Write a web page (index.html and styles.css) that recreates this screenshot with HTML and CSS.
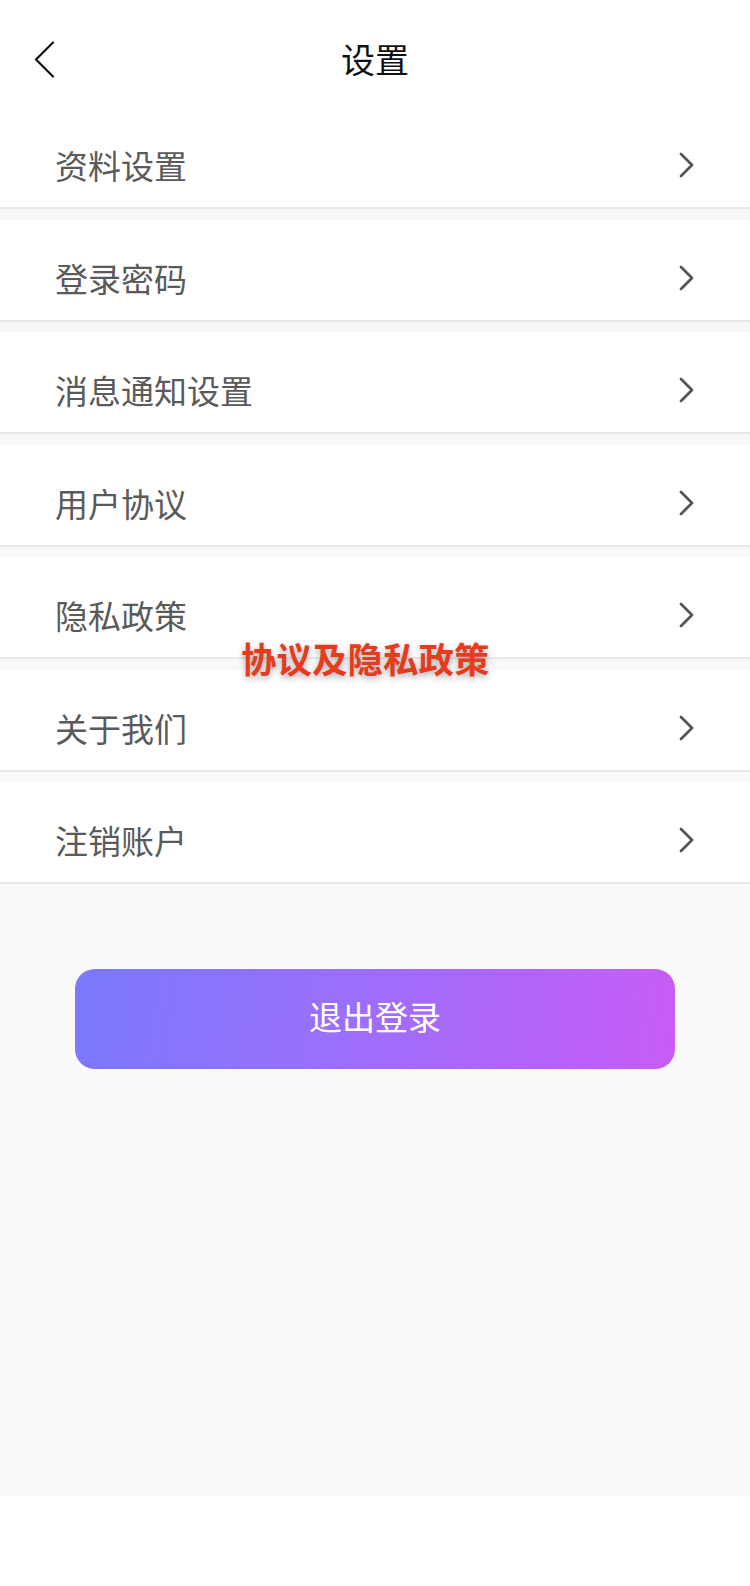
FILE: index.html
```html
<!DOCTYPE html>
<html lang="zh-CN">
<head>
    <meta charset="UTF-8">
    <meta name="viewport" content="width=device-width, initial-scale=1.0">
    <title>设置</title>
    <link rel="stylesheet" href="styles.css">
</head>
<body>

    <div class="page">
        <!-- Top bar -->
        <div class="top-bar">
            <svg class="back-icon" width="22" height="37" viewBox="0 0 22 37">
                <polyline points="20,1.5 3,18.5 20,35.5" fill="none" stroke="#111" stroke-width="2.2" stroke-linecap="round" stroke-linejoin="round"/>
            </svg>
            <h1 class="top-title">设置</h1>
        </div>

        <!-- Settings list -->
        <div class="settings-list">
            <div class="setting-row"><span>资料设置</span><svg class="arrow" width="18" height="28" viewBox="0 0 18 28"><polyline points="3,3 14,14 3,25" fill="none" stroke="#555" stroke-width="2.8" stroke-linecap="round" stroke-linejoin="round"/></svg></div>
            <div class="setting-row"><span>登录密码</span><svg class="arrow" width="18" height="28" viewBox="0 0 18 28"><polyline points="3,3 14,14 3,25" fill="none" stroke="#555" stroke-width="2.8" stroke-linecap="round" stroke-linejoin="round"/></svg></div>
            <div class="setting-row"><span>消息通知设置</span><svg class="arrow" width="18" height="28" viewBox="0 0 18 28"><polyline points="3,3 14,14 3,25" fill="none" stroke="#555" stroke-width="2.8" stroke-linecap="round" stroke-linejoin="round"/></svg></div>
            <div class="setting-row"><span>用户协议</span><svg class="arrow" width="18" height="28" viewBox="0 0 18 28"><polyline points="3,3 14,14 3,25" fill="none" stroke="#555" stroke-width="2.8" stroke-linecap="round" stroke-linejoin="round"/></svg></div>
            <div class="setting-row"><span>隐私政策</span><svg class="arrow" width="18" height="28" viewBox="0 0 18 28"><polyline points="3,3 14,14 3,25" fill="none" stroke="#555" stroke-width="2.8" stroke-linecap="round" stroke-linejoin="round"/></svg></div>
            <div class="setting-row"><span>关于我们</span><svg class="arrow" width="18" height="28" viewBox="0 0 18 28"><polyline points="3,3 14,14 3,25" fill="none" stroke="#555" stroke-width="2.8" stroke-linecap="round" stroke-linejoin="round"/></svg></div>
            <div class="setting-row"><span>注销账户</span><svg class="arrow" width="18" height="28" viewBox="0 0 18 28"><polyline points="3,3 14,14 3,25" fill="none" stroke="#555" stroke-width="2.8" stroke-linecap="round" stroke-linejoin="round"/></svg></div>

            <!-- annotation label over the list -->
            <div class="note-label">协议及隐私政策</div>
        </div>

        <!-- Logout area -->
        <div class="logout-area">
            <button class="logout-btn">退出登录</button>
        </div>
    </div>

</body>
</html>
```

FILE: styles.css
```css
:root {
    --white: #FFFFFF; --bg-gray: #f9f9f9; --line: #e8e8e8;
    --text-dark: #111; --text-medium: #5a5a5a;
}
html, body { margin: 0; padding: 0; background-color: var(--white); }
body {
    font-family: "Noto Sans CJK SC", "Noto Sans", sans-serif;
    color: var(--text-dark);
}
.page { width: 750px; }

.top-bar {
    height: 107px; position: relative; display: flex;
    align-items: flex-start; justify-content: center; background-color: var(--white);
}
.back-icon { position: absolute; left: 33px; top: 41px; }
.top-title {
    margin: 0; padding-top: 37px; font-size: 34px; font-weight: 400;
    line-height: 44px; color: var(--text-dark);
}

.settings-list { position: relative; background: linear-gradient(#f6f6f6, #fafafa); }
.setting-row {
    height: 100px; box-sizing: content-box; background-color: var(--white);
    border-bottom: 2px solid var(--line);
    display: flex; align-items: center; justify-content: space-between;
    padding: 0 54px 0 55px; font-size: 33px; color: var(--text-medium);
}
.setting-row span { padding-top: 16px; line-height: 44px; }
.setting-row .arrow { padding-top: 16px; }
.setting-row + .setting-row { margin-top: 10.5px; }

.note-label {
    position: absolute; left: 241px; top: 529px;
    font-size: 35.5px; font-weight: 700; color: #e63b1d; line-height: 44px;
    text-shadow: 0 3px 6px rgba(0, 0, 0, 0.3);
}

.logout-area {
    background-color: var(--bg-gray); height: 612px;
    padding-top: 85px; box-sizing: border-box;
}
.logout-btn {
    display: block; margin: 0 auto; width: 600px; height: 100px;
    border: none; border-radius: 20px; cursor: pointer; padding: 0 0 6px 0;
    background: linear-gradient(100deg, #7a79fd 0%, #9b6ffb 45%, #c85cf6 100%);
    color: var(--white); font-family: inherit; font-size: 33px; font-weight: 400;
}
```
